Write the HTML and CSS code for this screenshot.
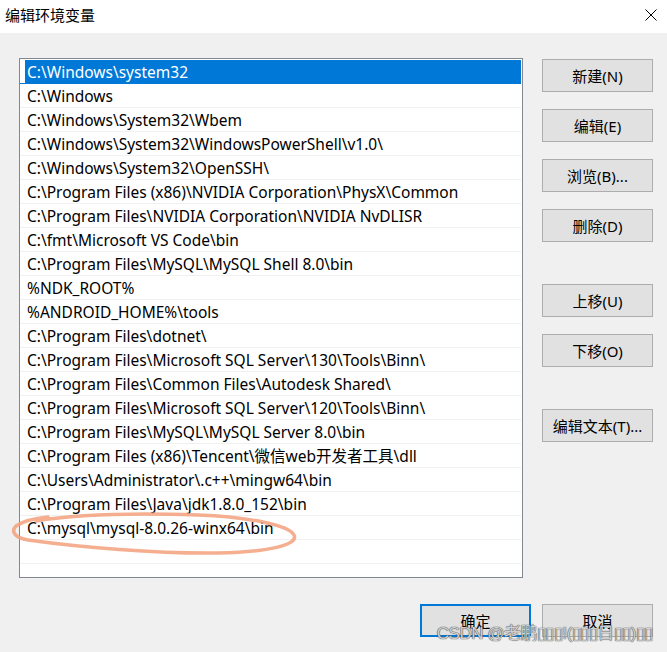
FILE: index.html
```html
<!DOCTYPE html>
<html lang="zh-CN">
<head>
<meta charset="utf-8">
<title>编辑环境变量</title>
<link rel="stylesheet" href="styles.css">
</head>
<body>
<div class="window">
  <div class="titlebar">
    <span class="title">编辑环境变量</span>
    <svg class="close" width="12" height="12" viewBox="0 0 12 12"><path d="M0.5 0.5 L11.5 11.5 M11.5 0.5 L0.5 11.5" stroke="#000" stroke-width="1" fill="none"/></svg>
  </div>
  <div class="content">
    <div class="top">
      <div class="listwrap">
        <div class="list">
          <div class="row sel">C:\Windows\system32</div>
          <div class="row">C:\Windows</div>
          <div class="row">C:\Windows\System32\Wbem</div>
          <div class="row">C:\Windows\System32\WindowsPowerShell\v1.0\</div>
          <div class="row">C:\Windows\System32\OpenSSH\</div>
          <div class="row">C:\Program Files (x86)\NVIDIA Corporation\PhysX\Common</div>
          <div class="row">C:\Program Files\NVIDIA Corporation\NVIDIA NvDLISR</div>
          <div class="row">C:\fmt\Microsoft VS Code\bin</div>
          <div class="row">C:\Program Files\MySQL\MySQL Shell 8.0\bin</div>
          <div class="row">%NDK_ROOT%</div>
          <div class="row">%ANDROID_HOME%\tools</div>
          <div class="row">C:\Program Files\dotnet\</div>
          <div class="row">C:\Program Files\Microsoft SQL Server\130\Tools\Binn\</div>
          <div class="row">C:\Program Files\Common Files\Autodesk Shared\</div>
          <div class="row">C:\Program Files\Microsoft SQL Server\120\Tools\Binn\</div>
          <div class="row">C:\Program Files\MySQL\MySQL Server 8.0\bin</div>
          <div class="row">C:\Program Files (x86)\Tencent\微信web开发者工具\dll</div>
          <div class="row">C:\Users\Administrator\.c++\mingw64\bin</div>
          <div class="row">C:\Program Files\Java\jdk1.8.0_152\bin</div>
          <div class="row">C:\mysql\mysql-8.0.26-winx64\bin</div>
          <div class="row"></div>
          <div class="row"></div>
        </div>
        <svg class="mark" width="300" height="52" viewBox="0 0 300 52">
          <path d="M40,9 C30,10 15,13 8,18 C2,24 8,30 20,32 C70,39 150,46 210,45 C260,44 291,37 286,27 C281,17 240,9 190,7 C130,5 70,6 28,13" stroke="#f3a07b" stroke-width="3.5" fill="none" stroke-linecap="round" opacity="0.85"/>
        </svg>
      </div>
      <div class="side">
        <div class="group">
          <button class="btn">新建(N)</button>
          <button class="btn">编辑(E)</button>
          <button class="btn">浏览(B)...</button>
          <button class="btn">删除(D)</button>
        </div>
        <div class="group">
          <button class="btn">上移(U)</button>
          <button class="btn">下移(O)</button>
        </div>
        <div class="group">
          <button class="btn">编辑文本(T)...</button>
        </div>
      </div>
    </div>
    <div class="footer">
      <button class="btn default">确定</button>
      <button class="btn">取消</button>
      <div class="watermark">CSDN @老鹏▯▯▯!(▯▯▯日▯▯)▯▯</div>
    </div>
  </div>
</div>
</body>
</html>
```
FILE: styles.css
```css
* { box-sizing: border-box; }
html, body { margin: 0; padding: 0; }
body {
  width: 667px;
  height: 652px;
  overflow: hidden;
  font-family: "Noto Sans", "Noto Sans CJK SC", sans-serif;
  font-size: 15px;
  color: #000;
}
.window {
  width: 667px;
  height: 652px;
  background: #f0f0f0;
}
.titlebar {
  height: 33px;
  background: #fff;
  display: flex;
  align-items: center;
  justify-content: space-between;
  padding: 0 10px 4px 5px;
}
.title {
  font-family: "Noto Sans CJK SC", sans-serif;
  font-size: 15px;
  line-height: 20px;
}
.close { display: block; }
.content {
  padding: 25px 14px 0 19px;
  position: relative;
}
.top {
  display: flex;
  gap: 19px;
}
.listwrap {
  position: relative;
}
.list {
  width: 504px;
  height: 520px;
  border: 1px solid #828790;
  background: #fff;
  padding: 1px 1px 0 0;
  overflow: hidden;
}
.row {
  height: 24px;
  line-height: 25px;
  padding-left: 7px;
  border-bottom: 1px solid #f0f0f0;
  white-space: nowrap;
  font-size: 15.5px;
  overflow: hidden;
}
.row.sel {
  color: #fff;
  border-bottom-color: #0078d7;
  background: linear-gradient(to right, #fff 5px, #0078d7 5px);
}
.mark {
  position: absolute;
  left: -11px;
  top: 450px;
  pointer-events: none;
}
.side {
  width: 111px;
  padding-top: 1px;
  display: flex;
  flex-direction: column;
  gap: 42px;
}
.group {
  display: flex;
  flex-direction: column;
  gap: 17px;
}
.btn {
  width: 111px;
  height: 33px;
  background: #e1e1e1;
  border: 1px solid #adadad;
  font-family: "Noto Sans", "Noto Sans CJK SC", sans-serif;
  font-size: 15px;
  color: #000;
  padding: 0;
  margin: 0;
}
.btn.default {
  border: 2px solid #0078d7;
}
.footer {
  display: flex;
  justify-content: flex-end;
  gap: 11px;
  margin-top: 26px;
  position: relative;
}
.watermark {
  position: absolute;
  right: 0;
  top: 15px;
  font-family: "Liberation Sans", "Noto Sans CJK SC", sans-serif;
  font-size: 17px;
  color: #cfcfcf;
  text-shadow: 0 0 1px #444, 0 0 1px #444;
  white-space: nowrap;
  letter-spacing: -0.5px;
}
```
